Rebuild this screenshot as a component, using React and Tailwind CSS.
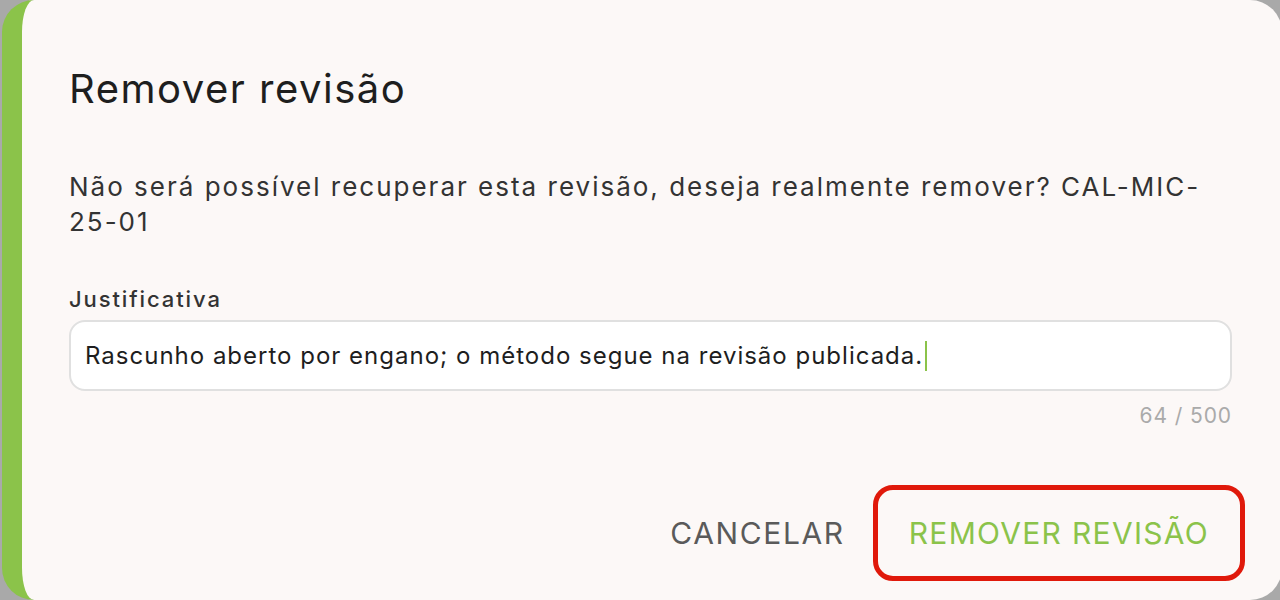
import React from 'react';

const font = { fontFamily: 'Inter, "Noto Sans", sans-serif' };

const App = () => {
    return (
        <div className="h-[600px] w-full overflow-hidden bg-[#a9a9a9]" style={font}>
            <div className="ml-[2px] flex h-[600px] w-[1280px] flex-col rounded-[32px] border-l-[20px] border-[#8bc34a] bg-[#fcf8f7] pl-[47px] pr-[50px]">
                <h1 className="pt-[65px] text-[40px] leading-[48px] font-normal tracking-[1.5px] text-[#1e1e1e]">Remover revisão</h1>

                <p className="mt-[56px] text-[26px] leading-[35px] tracking-[2px] text-[#333333]">
                    Não será possível recuperar esta revisão, deseja realmente remover? CAL-MIC-25-01
                </p>

                <label className="mt-[45px] text-[22px] leading-[30px] font-medium tracking-[1.9px] text-[#333333]">Justificativa</label>
                <div className="mt-[6px] flex h-[71px] items-center rounded-2xl border-2 border-[#e0e0e0] bg-white pl-[14px]">
                    <span className="text-[24px] tracking-[1px] text-[#1e1e1e]">Rascunho aberto por engano; o método segue na revisão publicada.</span>
                    <span className="ml-[2px] h-[30px] w-[2px] bg-[#8bc34a]"></span>
                </div>
                <div className="mt-[11px] text-right text-[21px] leading-[28px] tracking-[0.9px] text-[#aaaaaa]">64 / 500</div>

                <div className="mt-[55px] -mr-[13px] flex items-center justify-end">
                    <button className="mr-[28px] text-[30px] tracking-[1.6px] text-[#5a5a5a]">CANCELAR</button>
                    <button className="flex h-[96px] items-center rounded-[20px] border-[5px] border-[#e0190b] px-[31px] text-[30px] tracking-[1.3px] text-[#8bc34a]">
                        REMOVER REVISÃO
                    </button>
                </div>
            </div>
        </div>
    );
};

export default App;
